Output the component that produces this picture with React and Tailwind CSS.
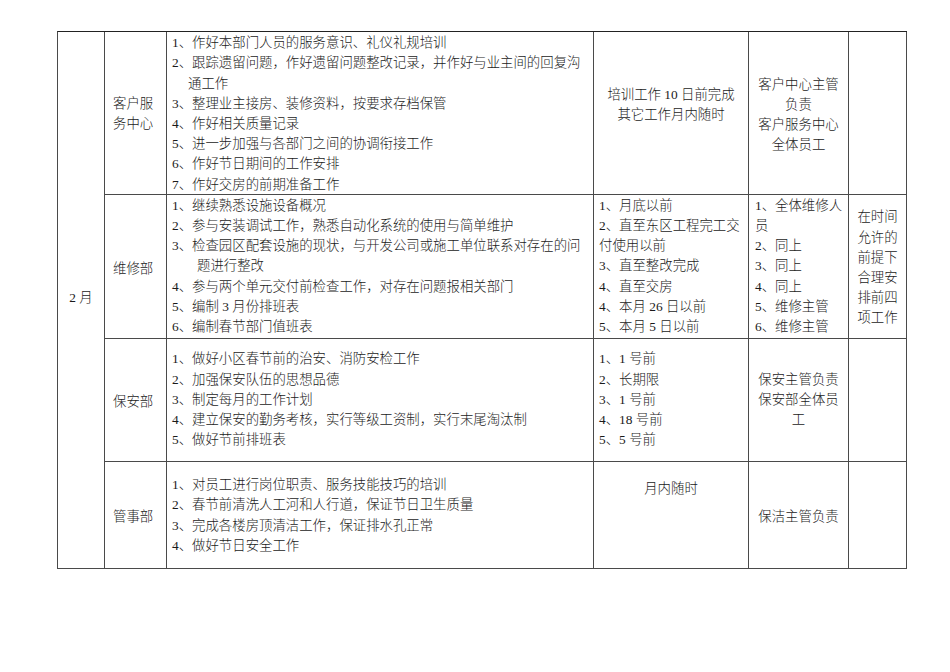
const cell = "border-r border-b border-[#4a4a4a] flex flex-col justify-center min-w-0 overflow-hidden";

// 每行一条，indent 为折行缩进
const tasks = [
  [
    "1、作好本部门人员的服务意识、礼仪礼规培训",
    "2、跟踪遗留问题，作好遗留问题整改记录，并作好与业主间的回复沟",
    { t: "通工作", indent: 16 },
    "3、整理业主接房、装修资料，按要求存档保管",
    "4、作好相关质量记录",
    "5、进一步加强与各部门之间的协调衔接工作",
    "6、作好节日期间的工作安排",
    "7、作好交房的前期准备工作",
  ],
  [
    "1、继续熟悉设施设备概况",
    "2、参与安装调试工作，熟悉自动化系统的使用与简单维护",
    "3、检查园区配套设施的现状，与开发公司或施工单位联系对存在的问",
    { t: "题进行整改", indent: 25 },
    "4、参与两个单元交付前检查工作，对存在问题报相关部门",
    "5、编制 3 月份排班表",
    "6、编制春节部门值班表",
  ],
  [
    "1、做好小区春节前的治安、消防安检工作",
    "2、加强保安队伍的思想品德",
    "3、制定每月的工作计划",
    "4、建立保安的勤务考核，实行等级工资制，实行末尾淘汰制",
    "5、做好节前排班表",
  ],
  [
    "1、对员工进行岗位职责、服务技能技巧的培训",
    "2、春节前清洗人工河和人行道，保证节日卫生质量",
    "3、完成各楼房顶清洁工作，保证排水孔正常",
    "4、做好节日安全工作",
  ],
];

function Lines({ items, center }) {
  return items.map((l, i) => {
    const t = typeof l === "string" ? l : l.t;
    const indent = typeof l === "string" ? 0 : l.indent;
    return (
      <div
        key={i}
        className={`whitespace-nowrap ${center ? "text-center" : ""}`}
        style={indent ? { paddingLeft: indent } : undefined}
      >
        {t || "\u00a0"}
      </div>
    );
  });
}

export default function App() {
  return (
    <div className="w-[950px] h-[672px] bg-white pl-[57px] pt-[31px] font-['Liberation_Serif','Noto_Sans_CJK_SC',serif] text-[13.4px] leading-[20.2px] text-[#1a1a1a] font-light">
      <div className="grid grid-cols-[47px_62px_427px_155px_100px_58px] grid-rows-[163px_144px_123px_107px] w-fit border-l border-t border-l-[#4a4a4a] border-t-[#222]">
        <div className={`${cell} row-span-4 items-center pb-[4px]`}>2 月</div>

        {/* 客户服务中心 */}
        <div className={`${cell} pl-[8px] pt-[2px]`}>
          <Lines items={["客户服", "务中心"]} />
        </div>
        <div className={`${cell} pl-[5px] pt-[2px]`}>
          <Lines items={tasks[0]} />
        </div>
        <div className={`${cell} pb-[16px]`}>
          <Lines center items={["培训工作 10 日前完成", "其它工作月内随时"]} />
        </div>
        <div className={`${cell} pt-[4px]`}>
          <Lines center items={["客户中心主管", "负责", "客户服务中心", "全体员工"]} />
        </div>
        <div className={cell} />

        {/* 维修部 */}
        <div className={`${cell} pl-[8px] pt-[5px]`}>
          <Lines items={["维修部"]} />
        </div>
        <div className={`${cell} pl-[5px]`}>
          <Lines items={tasks[1]} />
        </div>
        <div className={`${cell} pl-[5px]`}>
          <Lines
            items={[
              "1、月底以前",
              "2、直至东区工程完工交",
              "付使用以前",
              "3、直至整改完成",
              "4、直至交房",
              "4、本月 26 日以前",
              "5、本月 5 日以前",
            ]}
          />
        </div>
        <div className={`${cell} pl-[6px]`}>
          <Lines items={["1、全体维修人", "员", "2、同上", "3、同上", "4、同上", "5、维修主管", "6、维修主管"]} />
        </div>
        <div className={`${cell} pt-[3px]`}>
          <Lines center items={["在时间", "允许的", "前提下", "合理安", "排前四", "项工作"]} />
        </div>

        {/* 保安部 */}
        <div className={`${cell} pl-[8px] pt-[4px]`}>
          <Lines items={["保安部"]} />
        </div>
        <div className={`${cell} pl-[5px]`}>
          <Lines items={tasks[2]} />
        </div>
        <div className={`${cell} pl-[5px]`}>
          <Lines items={["1、1 号前", "2、长期限", "3、1 号前", "4、18 号前", "5、5 号前"]} />
        </div>
        <div className={cell}>
          <Lines center items={["保安主管负责", "保安部全体员", "工"]} />
        </div>
        <div className={cell} />

        {/* 管事部 */}
        <div className={`${cell} pl-[8px] pt-[4px]`}>
          <Lines items={["管事部"]} />
        </div>
        <div className={`${cell} pl-[5px] pt-[1px]`}>
          <Lines items={tasks[3]} />
        </div>
        <div className={`${cell} justify-start pt-[17px]`}>
          <Lines center items={["月内随时"]} />
        </div>
        <div className={`${cell} pt-[4px]`}>
          <Lines center items={["保洁主管负责"]} />
        </div>
        <div className={cell} />
      </div>
    </div>
  );
}
